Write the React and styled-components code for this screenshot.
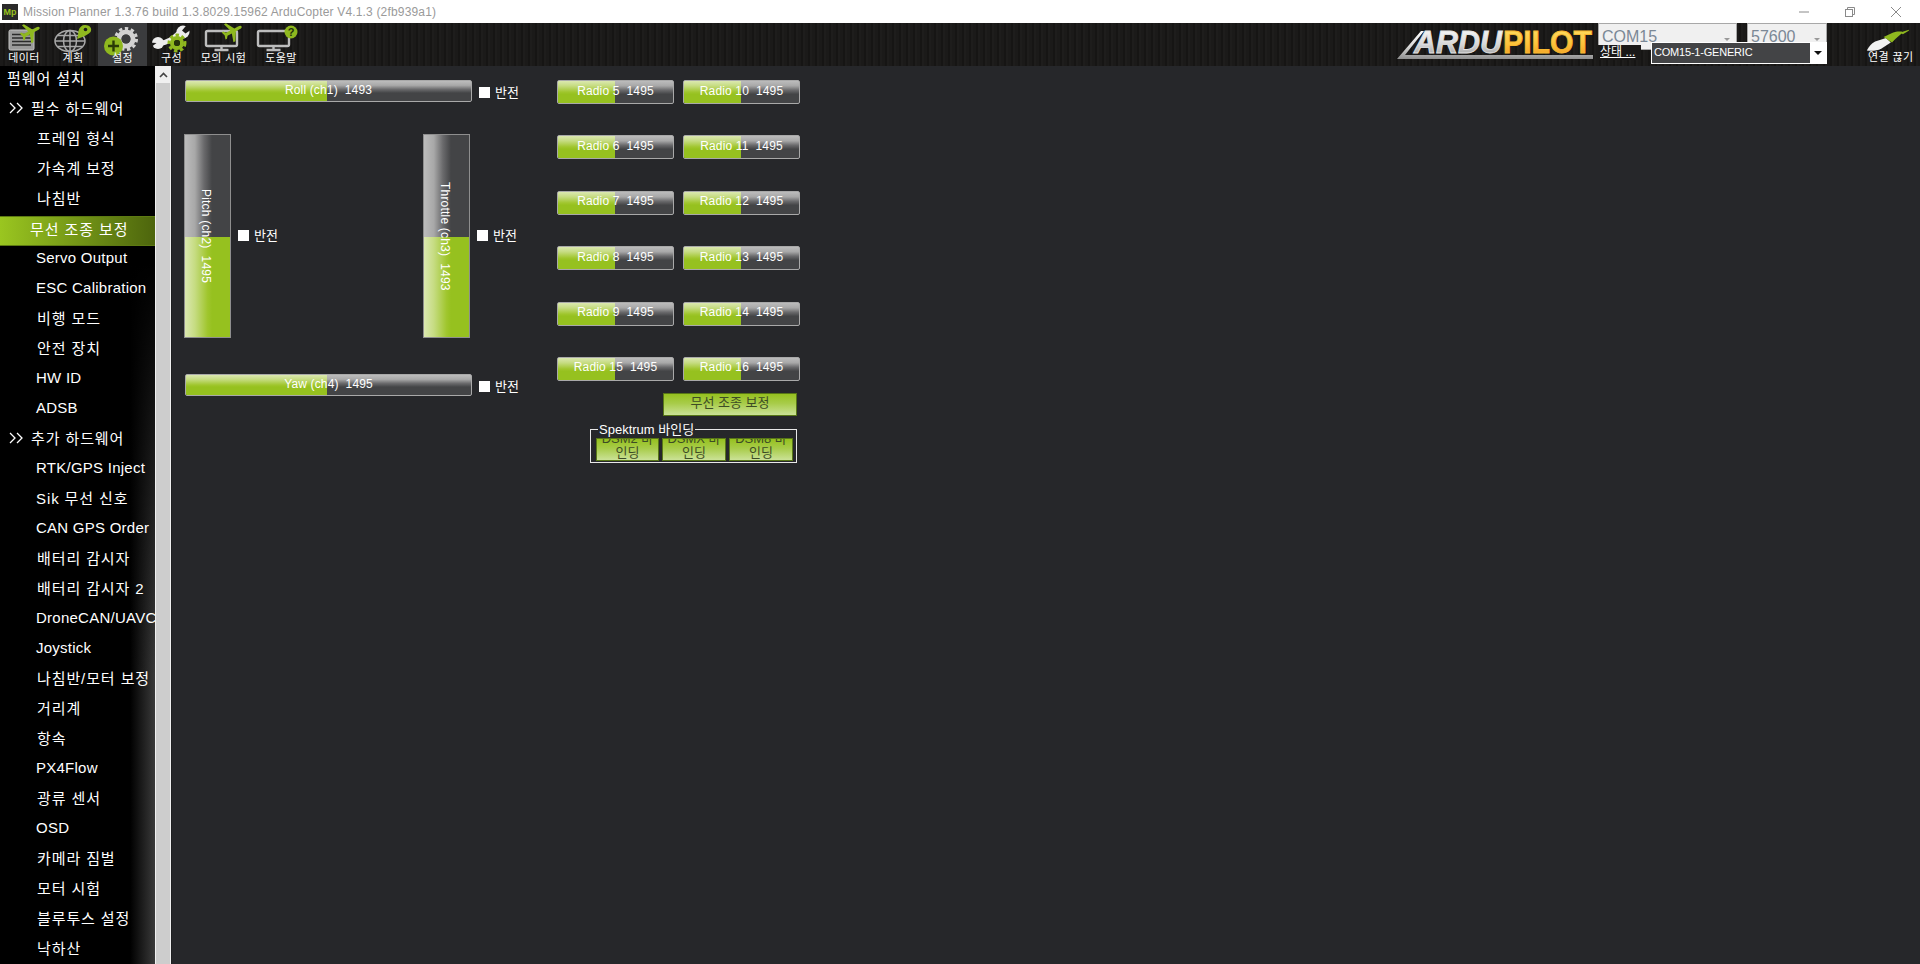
import React from "react";
import styled, { createGlobalStyle } from "styled-components";

const GlobalStyle = createGlobalStyle`
  html, body {
    margin: 0;
    padding: 0;
    height: 100%;
    overflow: hidden;
    background: #26272a;
    font-family: "Liberation Sans", "Noto Sans CJK KR", sans-serif;
  }
`;

const Window = styled.div`
  width: 1920px;
  height: 964px;
  display: flex;
  flex-direction: column;
  overflow: hidden;
`;

/* title bar */
const TitleBar = styled.div`
  height: 23px;
  flex: none;
  background: #fff;
  display: flex;
  align-items: center;
  padding-left: 2px;
`;

const AppIcon = styled.div`
  width: 16px;
  height: 16px;
  background: #2a2a2a;
  color: #9ac21f;
  font-size: 9px;
  font-weight: bold;
  line-height: 16px;
  text-align: center;
  margin-right: 5px;
`;

const TitleText = styled.span`
  color: #9a9a9a;
  font-size: 12px;
  letter-spacing: 0.17px;
  white-space: nowrap;
`;

const WindowControls = styled.div`
  margin-left: auto;
  display: flex;
  align-items: center;
  gap: 34px;
  padding-right: 18px;
  color: #8a8a8a;
`;

/* toolbar */
const Toolbar = styled.div`
  height: 43px;
  flex: none;
  display: flex;
  background: repeating-linear-gradient(90deg, #1b1a19 0 3px, #161514 3px 5px, #1e1d1c 5px 7px);
`;

const ToolButton = styled.div`
  width: ${(p) => p.$w}px;
  height: 43px;
  flex: none;
  display: flex;
  flex-direction: column;
  align-items: center;
  background: ${(p) => (p.$active ? "#3b3c3e" : "transparent")};
  position: relative;

  svg {
    overflow: visible;
    flex: none;
  }
`;

const ToolLabel = styled.span`
  position: absolute;
  top: 28px;
  left: 0;
  right: 0;
  text-align: center;
  font-size: 11px;
  letter-spacing: 0.4px;
  line-height: 15px;
  color: #fff;
  white-space: nowrap;
`;

const ToolRight = styled.div`
  margin-left: auto;
  display: flex;
  align-items: flex-start;
`;

const Logo = styled.svg`
  display: block;
  margin-top: 2px;
  width: 198px;
  height: 36px;
  margin-right: 3px;
`;

const ComboArea = styled.div`
  position: relative;
  width: 229px;
  height: 43px;
  display: flex;
  gap: 10px;
`;

const TopCombo = styled.div`
  width: ${(p) => p.$w}px;
  height: 27px;
  box-sizing: border-box;
  background: #f0f0f0;
  border: 1px solid #a8a8a8;
  color: #7b8896;
  font-size: 16px;
  line-height: 25px;
  padding-left: 3px;
  position: relative;
`;

const MiniArrow = styled.span`
  position: absolute;
  right: 6px;
  top: 14px;
  width: 0;
  height: 0;
  border-left: 3px solid transparent;
  border-right: 3px solid transparent;
  border-top: 3px solid #999;
`;

const StatusLink = styled.span`
  position: absolute;
  left: 0;
  top: 22px;
  padding: 0 6px 0 2px;
  background: #1a1918;
  color: #fff;
  font-size: 12px;
  line-height: 15px;
  text-decoration: underline;
`;

const PortCombo = styled.div`
  position: absolute;
  left: 53px;
  top: 19px;
  width: 176px;
  height: 22px;
  box-sizing: border-box;
  border: 1px solid #fff;
  background: #434446;
  color: #fff;
  font-size: 11px;
  letter-spacing: -0.2px;
  line-height: 18px;
  padding-left: 2px;
`;

const PortArrow = styled.span`
  position: absolute;
  right: 0;
  top: 0;
  bottom: 0;
  width: 16px;
  background: #fff;
  &::after {
    content: "";
    position: absolute;
    left: 4px;
    top: 8px;
    border-left: 4px solid transparent;
    border-right: 4px solid transparent;
    border-top: 4px solid #111;
  }
`;

const ConnectButton = styled.div`
  width: 93px;
  height: 43px;
  position: relative;
`;

const ConnectLabel = styled.span`
  position: absolute;
  left: 41px;
  top: 27px;
  font-size: 11px;
  letter-spacing: 0.4px;
  line-height: 15px;
  color: #fff;
  white-space: nowrap;
`;

/* body */
const Body = styled.div`
  flex: 1;
  min-height: 0;
  display: flex;
`;

const Sidebar = styled.div`
  width: 155px;
  flex: none;
  overflow: hidden;
  background:
    linear-gradient(180deg, #000 22%, rgba(0, 0, 0, 0) 68%),
    linear-gradient(90deg, #000 84%, #3a3a3a 100%);
`;

const MenuRow = styled.div`
  height: 30px;
  box-sizing: border-box;
  display: flex;
  align-items: center;
  padding: 0 0 ${(p) => (p.$active ? 5 : 7)}px ${(p) => p.$indent}px;
  color: #fff;
  font-size: 15px;
  letter-spacing: ${(p) => (p.$latin ? 0.25 : 0.9)}px;
  white-space: nowrap;
  overflow: hidden;
  background: ${(p) => (p.$active ? "linear-gradient(90deg, #9ac620 0%, #4d650d 100%)" : "transparent")};
  border-top: ${(p) => (p.$active ? "1px solid #5d7a12" : "0")};
  border-bottom: ${(p) => (p.$active ? "1px solid #5d7a12" : "0")};
`;

const Chevrons = styled.svg`
  flex: none;
  margin-right: 7px;
`;

const Scrollbar = styled.div`
  width: 16px;
  flex: none;
  box-sizing: border-box;
  border-left: 1px solid #f0f0f0;
  border-right: 1px solid #f0f0f0;
  background: #cdcdcd;
`;

const ScrollButton = styled.div`
  height: 17px;
  background: #f0f0f0;
  color: #444;
  display: flex;
  align-items: center;
  justify-content: center;
`;

const Main = styled.div`
  flex: 1;
  background: #26272a;
  padding: 14px 0 0 13px;
  display: flex;
  align-items: flex-start;
  border-left: 1px solid #1e1f21;
`;

const StickColumn = styled.div`
  width: 372px;
  flex: none;
  display: flex;
  flex-direction: column;
`;

const HorizontalRow = styled.div`
  display: flex;
  align-items: center;
  margin-top: ${(p) => p.$mt || 0}px;
`;

const Bar = styled.div`
  position: relative;
  box-sizing: border-box;
  flex: none;
  width: ${(p) => p.$w}px;
  height: ${(p) => p.$h}px;
  border: 1px solid #a9a9a9;
  border-radius: 2px;
  overflow: hidden;
  background: linear-gradient(180deg, #bcbcbc 0%, #a8a8a8 22%, #6a6a6c 42%, #434446 60%, #434446 100%);
`;

const BarFill = styled.div`
  position: absolute;
  left: 0;
  top: 0;
  bottom: 0;
  background: linear-gradient(180deg, #dbe8b0 0%, #c6dc82 22%, #a0c62e 50%, #96c11f 60%, #96c11f 100%);
`;

const BarText = styled.span`
  position: absolute;
  inset: 0 0 3px 0;
  display: flex;
  align-items: center;
  justify-content: center;
  color: #fff;
  font-size: 12px;
  letter-spacing: 0.15px;
  white-space: pre;
`;

const StickRow = styled.div`
  margin-top: 32px;
  margin-left: -1px;
  display: grid;
  grid-template-columns: 239px 1fr;
`;

const StickCell = styled.div`
  display: flex;
  align-items: center;
`;

const VBar = styled.div`
  position: relative;
  box-sizing: border-box;
  flex: none;
  width: 47px;
  height: 204px;
  border: 1px solid #8e8e8e;
  overflow: hidden;
  background: linear-gradient(90deg, #bcbcbc 0%, #a8a8a8 22%, #6a6a6c 42%, #434446 60%, #434446 100%);
`;

const VBarFill = styled.div`
  position: absolute;
  left: 0;
  right: 0;
  bottom: 0;
  background: linear-gradient(90deg, #dbe8b0 0%, #c6dc82 22%, #a0c62e 50%, #96c11f 60%, #96c11f 100%);
`;

const VBarText = styled.span`
  position: absolute;
  inset: 0 3px 0 0;
  display: flex;
  align-items: center;
  justify-content: center;
  writing-mode: vertical-rl;
  color: #fff;
  font-size: 12px;
  letter-spacing: 0.2px;
  white-space: pre;
`;

const Reverse = styled.label`
  display: flex;
  align-items: center;
  margin-left: ${(p) => p.$ml}px;
  margin-bottom: ${(p) => p.$mb || 0}px;
  color: #fff;
  font-size: 13px;
`;

const Box = styled.span`
  width: 11px;
  height: 11px;
  background: #fff;
  margin-right: 5px;
  margin-top: 3px;
`;

const RadioColumn = styled.div`
  display: flex;
  flex-direction: column;
  width: 243px;
`;

const RadioGrid = styled.div`
  display: grid;
  grid-template-columns: 117px 117px;
  column-gap: 9px;
  row-gap: 31.4px;
`;

const GreenButton = styled.div`
  box-sizing: border-box;
  border: 1px solid #587717;
  background: linear-gradient(180deg, #96c11f 0%, #a8cc4a 45%, #cbe297 100%);
  color: #3d4c25;
  font-size: 13px;
  text-align: center;
`;

const CalibrateButton = styled(GreenButton)`
  width: 134px;
  height: 23px;
  margin: 12px 0 0 106px;
  line-height: 18px;
`;

const BindGroup = styled.fieldset`
  box-sizing: border-box;
  width: 207px;
  height: 41px;
  margin: 6px 0 0 33px;
  padding: 0 3px 2px 5px;
  border: 1px solid #e8e8e8;
  display: flex;
  min-width: 0;
`;

const BindLegend = styled.legend`
  margin-left: 2px;
  padding: 0 1px;
  color: #fff;
  font-size: 13px;
  line-height: 15px;
`;

const BindRow = styled.div`
  display: grid;
  grid-template-columns: 63px 64px 64px;
  column-gap: 3px;
  margin-top: 1px;
`;

const BindButton = styled(GreenButton)`
  height: 23px;
  overflow: hidden;
  display: flex;
  flex-direction: column;
  justify-content: flex-end;
  line-height: 14px;
  white-space: nowrap;
`;

const menu = [
  ["펌웨어 설치", 7],
  ["필수 하드웨어", 9, "head"],
  ["프레임 형식", 37],
  ["가속계 보정", 37],
  ["나침반", 37],
  ["무선 조종 보정", 30, "active"],
  ["Servo Output", 36],
  ["ESC Calibration", 36],
  ["비행 모드", 37],
  ["안전 장치", 37],
  ["HW ID", 36],
  ["ADSB", 36],
  ["추가 하드웨어", 9, "head"],
  ["RTK/GPS Inject", 36],
  ["Sik 무선 신호", 36],
  ["CAN GPS Order", 36],
  ["배터리 감시자", 37],
  ["배터리 감시자 2", 37],
  ["DroneCAN/UAVCAN", 36],
  ["Joystick", 36],
  ["나침반/모터 보정", 37],
  ["거리계", 37],
  ["항속", 37],
  ["PX4Flow", 36],
  ["광류 센서", 37],
  ["OSD", 36],
  ["카메라 짐벌", 37],
  ["모터 시험", 37],
  ["블루투스 설정", 37],
  ["낙하산", 37],
];

const radios = [
  ["Radio 5", "Radio 10"],
  ["Radio 6", "Radio 11"],
  ["Radio 7", "Radio 12"],
  ["Radio 8", "Radio 13"],
  ["Radio 9", "Radio 14"],
  ["Radio 15", "Radio 16"],
];

const pct = (v) => `${((v - 1000) / 1000) * 100}%`;

const PlanePath = ({ transform, fill = "#8fb81f" }) => (
  <path
    transform={transform}
    fill={fill}
    d="M12 0c1.2 0 1.8 1.6 1.8 3.5V8l9.2 5.5v2.4l-9.2-2.9v5.3l2.6 2v1.9L12 20.8l-4.4 1.4v-1.9l2.6-2V13L1 15.9v-2.4L10.2 8V3.5C10.2 1.6 10.8 0 12 0z"
  />
);

const Gear = ({ cx, cy, r, fill, hole, width = 4 }) => (
  <g>
    <circle cx={cx} cy={cy} r={r} fill="none" stroke={fill} strokeWidth={width} />
    <circle cx={cx} cy={cy} r={r + width / 2 + 1} fill="none" stroke={fill} strokeWidth="3" strokeDasharray="3.4 2.6" />
    {hole && <circle cx={cx} cy={cy} r={r - width / 2} fill={hole} />}
  </g>
);

const Monitor = ({ x, w }) => (
  <g fill="none" stroke="#bdbdbd" strokeWidth="2.4">
    <rect x={x} y="8" width={w} height="15" rx="1.5" />
    <path d={`M${x + w / 2} 23v3M${x + w / 2 - 7} 27h14`} />
  </g>
);

const DataIcon = () => (
  <svg width="47" height="30" viewBox="0 0 47 30">
    <rect x="8" y="7" width="25" height="20" rx="1.5" fill="#9a9a9a" stroke="#c4c4c4" />
    <path d="M11 11.500h19M11 15h19M11 18.500h19M11 22h19" stroke="#2b2b2b" strokeWidth="1.600" />
    <PlanePath transform="translate(20 1) rotate(62 12 8) scale(.92)" />
  </svg>
);

const PlanIcon = () => (
  <svg width="50" height="30" viewBox="0 0 50 30">
    <g fill="none" stroke="#a8a8a8" strokeWidth="1.500">
      <ellipse cx="22" cy="18" rx="15" ry="10.500" fill="#1f1f1f" />
      <ellipse cx="22" cy="18" rx="6.500" ry="10.500" />
      <path d="M22 7.500v21M7 18h30M9.500 12.500h25M9.500 23.500h25" />
    </g>
    <path d="M37 2c5 0 7.500 3.500 5.500 7C40.500 11.500 36 13.500 29 16c1.500-4 1-6 1.600-8.500C31.500 4 34 2 37 2z" fill="#8fb81f" />
    <circle cx="37.500" cy="6.500" r="1.800" fill="#1d1d1d" />
  </svg>
);

const SetupIcon = () => (
  <svg width="49" height="30" viewBox="0 0 49 30">
    <Gear cx={28} cy={16} r={7} fill="#d2d2d2" hole="#3b3c3e" width={5} />
    <circle cx="15.500" cy="23" r="9.500" fill="#8fb81f" />
    <path d="M10 23h11M15.500 17.500v11" stroke="#2a3b07" strokeWidth="2.400" />
  </svg>
);

const ConfigIcon = () => (
  <svg width="49" height="30" viewBox="0 0 49 30">
    <path d="M11 20C18 21 24 18 32 10" fill="none" stroke="#ececec" strokeWidth="5" strokeLinecap="round" />
    <circle cx="36" cy="9" r="6.500" fill="#ececec" />
    <path d="M35 7.500L41 0.500L45 6L38.500 10.500Z" fill="#1b1a19" />
    <circle cx="11" cy="20" r="6" fill="#ececec" />
    <path d="M2 19.500L9.500 20L3 25Z" fill="#1b1a19" />
    <Gear cx={30} cy={20} r={5} fill="#8fb81f" hole="#26330a" width={4} />
  </svg>
);

const SimIcon = () => (
  <svg width="55" height="30" viewBox="0 0 55 30">
    <Monitor x={10} w={31} />
    <PlanePath transform="translate(27 0) rotate(62 12 8) scale(.92)" />
  </svg>
);

const HelpIcon = () => (
  <svg width="60" height="30" viewBox="0 0 60 30">
    <Monitor x={7} w={31} />
    <circle cx="40" cy="9" r="6.500" fill="#8fb81f" />
    <text x="40" y="13" fontSize="11" fontWeight="bold" textAnchor="middle" fill="#22300a" fontFamily="Liberation Sans">?</text>
  </svg>
);

const tools = [
  ["데이터", 48, DataIcon],
  ["계획", 50, PlanIcon],
  ["설정", 49, SetupIcon, true],
  ["구성", 49, ConfigIcon],
  ["모의 시험", 55, SimIcon],
  ["도움말", 60, HelpIcon],
];

const ArduLogo = () => (
  <Logo viewBox="0 0 198 36">
    <defs>
      <linearGradient id="silver" x1="0" y1="0" x2="0" y2="1">
        <stop offset="0" stopColor="#ffffff" />
        <stop offset="0.55" stopColor="#d8d8d8" />
        <stop offset="1" stopColor="#8f8f8f" />
      </linearGradient>
      <linearGradient id="gold" x1="0" y1="0" x2="0" y2="1">
        <stop offset="0" stopColor="#ffe36a" />
        <stop offset="0.55" stopColor="#fcc23a" />
        <stop offset="1" stopColor="#ee9420" />
      </linearGradient>
    </defs>
    <text x="17" y="28" fontFamily="Liberation Sans" fontWeight="bold" fontStyle="italic" fontSize="31" fill="url(#silver)" stroke="#e4e4e4" strokeWidth="0.8" textLength="88" lengthAdjust="spacingAndGlyphs">ARDU</text>
    <text x="106" y="28" fontFamily="Liberation Sans" fontWeight="bold" fontSize="31" fill="url(#gold)" stroke="#f8b830" strokeWidth="0.8" textLength="89" lengthAdjust="spacingAndGlyphs">PILOT</text>
    <path d="M0 34 L24 6 L27 6 L8 30 L196 30 L196 34 Z" fill="url(#silver)" />
  </Logo>
);

const TitleControls = () => (
  <WindowControls>
    <svg width="12" height="12" viewBox="0 0 12 12">
      <path d="M1 6h10" stroke="currentColor" />
    </svg>
    <svg width="12" height="12" viewBox="0 0 12 12" fill="none" stroke="currentColor">
      <rect x="1.500" y="3.500" width="7" height="7" />
      <path d="M3.500 3.500v-2h7v7h-2" />
    </svg>
    <svg width="12" height="12" viewBox="0 0 12 12">
      <path d="M1 1l10 10M11 1L1 11" stroke="currentColor" />
    </svg>
  </WindowControls>
);

const HBar = ({ w, h, label, value }) => (
  <Bar $w={w} $h={h}>
    <BarFill style={{ width: pct(value) }} />
    <BarText>{`${label}  ${value}`}</BarText>
  </Bar>
);

const Stick = ({ label, value }) => (
  <VBar>
    <VBarFill style={{ height: pct(value) }} />
    <VBarText>{`${label}  ${value}`}</VBarText>
  </VBar>
);

const DoubleChevron = () => (
  <Chevrons width="15" height="12" viewBox="0 0 15 12" fill="none" stroke="#fff" strokeWidth="1.300">
    <path d="M1 1l5 5-5 5M8 1l5 5-5 5" />
  </Chevrons>
);

export default function App() {
  return (
    <>
      <GlobalStyle />
      <Window>
        <TitleBar>
          <AppIcon>Mp</AppIcon>
          <TitleText>Mission Planner 1.3.76 build 1.3.8029.15962 ArduCopter V4.1.3 (2fb939a1)</TitleText>
          <TitleControls />
        </TitleBar>

        <Toolbar>
          {tools.map(([label, w, Icon, active]) => (
            <ToolButton key={label} $w={w} $active={active}>
              <Icon />
              <ToolLabel>{label}</ToolLabel>
            </ToolButton>
          ))}
          <ToolRight>
            <ArduLogo />
            <ComboArea>
              <TopCombo $w={139}>
                COM15
                <MiniArrow />
              </TopCombo>
              <TopCombo $w={80}>
                57600
                <MiniArrow />
              </TopCombo>
              <StatusLink>상태 ...</StatusLink>
              <PortCombo>
                COM15-1-GENERIC
                <PortArrow />
              </PortCombo>
            </ComboArea>
            <ConnectButton>
              <svg width="93" height="30" viewBox="0 0 93 30">
                <g transform="translate(-1 5) scale(1.2 .9)">
                  <path d="M34 25c4 1 9 0 12-2l8-7-4-5-9 4c-3 2-5 5-7 10z" fill="#f2f2f2" />
                  <path d="M48 10l8-5c2-1 5-1 7-1l1 1-6 7-3 4z" fill="#8fb81f" />
                  <path d="M62 5l7-3v1l-5 4z" fill="#8fb81f" />
                </g>
              </svg>
              <ConnectLabel>연결 끊기</ConnectLabel>
            </ConnectButton>
          </ToolRight>
        </Toolbar>

        <Body>
          <Sidebar>
            {menu.map(([label, indent, kind]) => (
              <MenuRow
                key={label}
                $indent={indent}
                $active={kind === "active"}
                $latin={!/[가-힣]/.test(label)}
              >
                {kind === "head" && <DoubleChevron />}
                {label}
              </MenuRow>
            ))}
          </Sidebar>
          <Scrollbar>
            <ScrollButton>
              <svg width="9" height="6" viewBox="0 0 9 6">
                <path d="M1 5l3.500-3.500L8 5" fill="none" stroke="currentColor" strokeWidth="1.600" />
              </svg>
            </ScrollButton>
          </Scrollbar>
          <Main>
            <StickColumn>
              <HorizontalRow>
                <HBar w={287} h={22} label="Roll (ch1)" value={1493} />
                <Reverse $ml={7}>
                  <Box />
                  반전
                </Reverse>
              </HorizontalRow>
              <StickRow>
                <StickCell>
                  <Stick label="Pitch (ch2)" value={1495} />
                  <Reverse $ml={7} $mb={4}>
                    <Box />
                    반전
                  </Reverse>
                </StickCell>
                <StickCell>
                  <Stick label="Throttle (ch3)" value={1493} />
                  <Reverse $ml={7} $mb={4}>
                    <Box />
                    반전
                  </Reverse>
                </StickCell>
              </StickRow>
              <HorizontalRow $mt={36}>
                <HBar w={287} h={22} label="Yaw (ch4)" value={1495} />
                <Reverse $ml={7}>
                  <Box />
                  반전
                </Reverse>
              </HorizontalRow>
            </StickColumn>
            <RadioColumn>
              <RadioGrid>
                {radios.flat().map((name) => (
                  <HBar key={name} w={117} h={24} label={name} value={1495} />
                ))}
              </RadioGrid>
              <CalibrateButton>무선 조종 보정</CalibrateButton>
              <BindGroup>
                <BindLegend>Spektrum 바인딩</BindLegend>
                <BindRow>
                  <BindButton>
                    <span>DSM2 바</span>
                    <span>인딩</span>
                  </BindButton>
                  <BindButton>
                    <span>DSMX 바</span>
                    <span>인딩</span>
                  </BindButton>
                  <BindButton>
                    <span>DSM8 바</span>
                    <span>인딩</span>
                  </BindButton>
                </BindRow>
              </BindGroup>
            </RadioColumn>
          </Main>
        </Body>
      </Window>
    </>
  );
}
